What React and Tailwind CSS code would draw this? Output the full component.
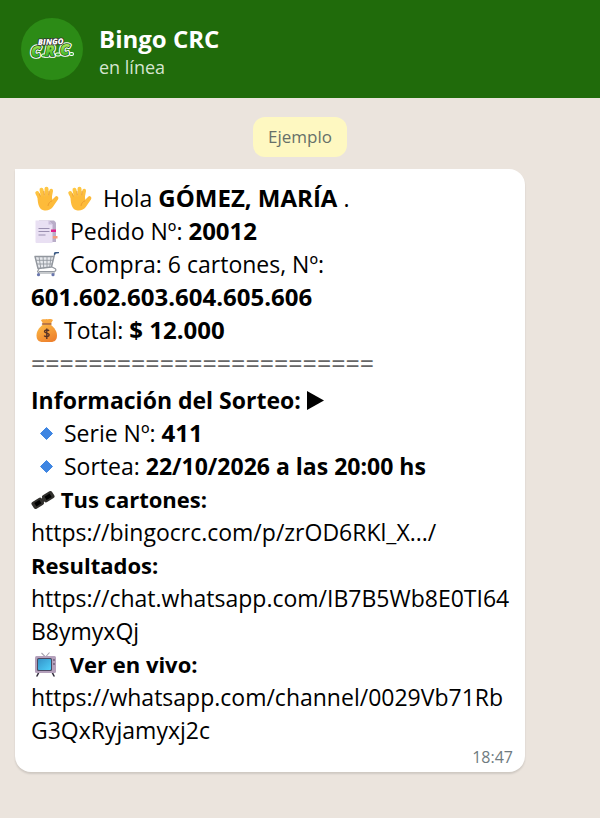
import React from "react";

const emojiClass = "inline-block align-middle size-[25px] ml-[3px] mr-[5px] -mt-[5px]";

const Hand = () => (
  <svg viewBox="0 0 25 25" className={emojiClass} aria-hidden="true">
    <defs>
      <linearGradient id="hand" gradientUnits="userSpaceOnUse" x1="8" y1="0" x2="14" y2="22">
        <stop offset="0" stopColor="#ffca45" />
        <stop offset="1" stopColor="#f9b037" />
      </linearGradient>
    </defs>
    <g stroke="url(#hand)" strokeLinecap="round" fill="none">
      <path d="M6.500 13 3.200 7" strokeWidth="3.800" />
      <path d="M9.200 12 7.500 3.800" strokeWidth="4" />
      <path d="M12.800 12 12.500 2.800" strokeWidth="4" />
      <path d="M15.800 12 17.200 4.600" strokeWidth="3.700" />
      <path d="M17 17.500 22.500 12" strokeWidth="3.600" />
    </g>
    <path
      d="M3.500 11 17.800 10l.6 4.500 3.200-2.600c1.600-1 3 .4 2.200 1.800l-5 7.200c-2 2.700-5.200 4-9.300 3.300C5.500 23.500 3.700 19 3.500 11Z"
      fill="#fdbb3a"
    />
    <path d="M14 20c.4-2.800 1.800-4.500 4.200-5.200M6.300 10.500 5.400 7.500M10.400 9.500 9.900 5M14.700 9.500 15 5" stroke="#e8952c" strokeWidth="0.800" fill="none" />
  </svg>
);

const Pages = () => (
  <svg viewBox="0 0 25 25" className={emojiClass} aria-hidden="true">
    <path d="M5 1.500h15l2 2v19.500H5Z" fill="#b9adc8" />
    <path d="M18.500 17h5v2.500h-5Z" fill="#f59c7c" />
    <path d="M1.500 1.500h13l4 4V24h-16a1 1 0 0 1-1-1Z" fill="#e9e0f3" />
    <path d="M14.500 1.500v4h4Z" fill="#cbbddb" />
    <path d="M4.500 9.500h11M4.500 12.500h11M4.500 16h7" stroke="#9a8fb0" strokeWidth="1" />
    <path d="M17 10.500h5V13h-5Z" fill="#e0218a" />
  </svg>
);

const Cart = () => (
  <svg viewBox="0 0 25 25" className={emojiClass} aria-hidden="true">
    <path d="M1 4.500h19l-2.500 10.500L4 16.500Z" fill="#e7e9ed" />
    <g fill="none" stroke="#92979e" strokeLinejoin="round">
      <path d="M1 4.500h19l-2.500 10.500L4 16.500Z" strokeWidth="1.400" />
      <path d="m5 4.500 1.800 12M9 4.500l.8 12M13 4.500v11.500M17 4.500l-1.300 11M2 8.300h17M3 12h15.500" strokeWidth="0.900" />
      <path d="M20 4.500 21 1.500M18 15l3.300 1.800c1 .9.500 2.700-1.300 2.700H5" strokeWidth="1.200" />
      <path d="m5 17-1.500 2.500L5 21h16" strokeWidth="1.100" />
    </g>
    <path d="m20.600 2 .4-1 3.500-.5" fill="none" stroke="#365783" strokeWidth="1.700" strokeLinecap="round" />
    <circle cx="4.500" cy="22.700" r="1.600" fill="#6976ad" />
    <circle cx="19" cy="22.700" r="1.600" fill="#6976ad" />
  </svg>
);

const MoneyBag = () => (
  <svg viewBox="0 0 25 25" className={emojiClass} aria-hidden="true">
    <defs>
      <linearGradient id="bag" x1="0" y1="0" x2="0.600" y2="1">
        <stop offset="0" stopColor="#fdbd46" />
        <stop offset="1" stopColor="#ee822e" />
      </linearGradient>
    </defs>
    <path d="M9 5.500 7 2.200C9 .2 10.500 2 12.500 1c2 1 4-1 6.500 1l-2.200 3.800Z" fill="#f9a73e" />
    <path d="M9 6.500h7.500c4 3 6.500 7 6.500 11 0 4.500-2.500 6.500-6 6.500H8.500C5 24 2.500 22 2.500 17.500c0-4 2.500-8 6.500-11Z" fill="url(#bag)" />
    <path d="M8.500 6H17" stroke="#a55b2a" strokeWidth="1.400" strokeLinecap="round" />
    <path d="M15 12.800c-.8-1.300-4.500-1.200-4.500.8s4.700 1 4.700 3.200-3.900 2.400-5 .8M12.800 10.500v10.500" fill="none" stroke="#573326" strokeWidth="1.400" />
  </svg>
);

const Diamond = () => (
  <svg viewBox="0 0 25 25" className={emojiClass} aria-hidden="true">
    <path d="m12.500 6.500 6 6-6 6-6-6Z" fill="#3f86e2" stroke="#3f86e2" strokeLinejoin="round" />
  </svg>
);

const Play = () => (
  <svg viewBox="0 0 17 19" className="inline-block align-middle w-[17px] h-[19px] -mt-1" aria-hidden="true">
    <path d="M0 0v19l17-9.500Z" fill="#000" />
  </svg>
);

const Ticket = () => (
  <svg viewBox="0 0 24 20" className="inline-block align-middle w-6 h-5 -mt-1" aria-hidden="true">
    <g transform="rotate(-32 12 10)">
      <rect x="0" y="6" width="11.600" height="8" rx="2" fill="#302f2c" />
      <rect x="12.400" y="6" width="11.600" height="8" rx="2" fill="#302f2c" />
      <rect x="3" y="8" width="6" height="4" fill="#000" />
      <rect x="15" y="8" width="6" height="4" fill="#000" />
      <path d="M11 10h2" stroke="#302f2c" strokeWidth="4" />
    </g>
  </svg>
);

const Tv = () => (
  <svg viewBox="0 0 25 25" className={emojiClass} aria-hidden="true">
    <defs>
      <linearGradient id="screen" x1="0" y1="0" x2="1" y2="1">
        <stop offset="0" stopColor="#3593c9" />
        <stop offset="1" stopColor="#4dd0fa" />
      </linearGradient>
    </defs>
    <path d="m7.500 1 4 4 4-4.500" fill="none" stroke="#a9a4b0" strokeWidth="1.100" />
    <path d="M5 20 3 24M18 20l2 4" stroke="#34303e" strokeWidth="1.600" strokeLinecap="round" />
    <rect x="1" y="4" width="21" height="17" rx="1.500" fill="#b4a0bb" />
    <rect x="3" y="6" width="15" height="13" rx="1.500" fill="#4c4961" />
    <rect x="4" y="7" width="13" height="11" rx="1" fill="url(#screen)" />
    <circle cx="20" cy="8" r="0.900" fill="#695a73" />
    <circle cx="20" cy="12" r="0.900" fill="#695a73" />
  </svg>
);

const Logo = () => (
  <svg viewBox="0 0 62 62" className="size-[62px] shrink-0" role="img" aria-label="Bingo CRC">
    <defs>
      <linearGradient id="crc" x1="0" y1="0" x2="0" y2="1">
        <stop offset="0.300" stopColor="#a2e352" />
        <stop offset="0.800" stopColor="#2fae25" />
      </linearGradient>
    </defs>
    <circle cx="31" cy="31" r="31" fill="#2c8b16" />
    <g fontFamily="Open Sans, sans-serif" fontStyle="italic" fontWeight="800" strokeLinejoin="round">
      <g fontSize="15">
        <path d="M22 37.500h2M36 36.500h2M50 36h1" stroke="#fff" strokeWidth="4" strokeLinecap="round" />
        <text x="10 24 39" y="39 38 37" fill="#fff" stroke="#fff" strokeWidth="3.600">
          CRC
        </text>
        <text x="10 24 39" y="39 38 37" fill="url(#crc)" stroke="#14590f" strokeWidth="1.400" paintOrder="stroke" aria-hidden="true">
          CRC
        </text>
        <path d="M22 37.500h2M36 36.500h2M50 36h1" stroke="#2fae25" strokeWidth="2" strokeLinecap="round" />
      </g>
      <text x="17" y="27" fontSize="8" fill="#fff" stroke="#333" strokeWidth="1.600" paintOrder="stroke" transform="rotate(-2 17 27)">
        BINGO
      </text>
    </g>
  </svg>
);

const Link = ({ href, children }) => (
  <p>
    <a href={href} className="break-all">
      {children}
    </a>
  </p>
);

const Value = ({ children }) => <b className="text-2xl leading-6">{children}</b>;

const App = () => {
  return (
    <div className="min-h-screen bg-[#ebe4dd] font-['Open_Sans',sans-serif] text-black">
      {/* Header */}
      <header className="flex items-center gap-4 bg-[#206b0b] px-[21px] py-[18px]">
        <Logo />
        <div className="pt-[5px]">
          <h1 className="text-2xl leading-[30px] font-bold text-white">Bingo CRC</h1>
          <p className="text-lg leading-[26px] text-[#d5e5d0]">en línea</p>
        </div>
      </header>

      <main className="px-[15px] pt-[19px] pb-6">
        <div className="flex justify-center">
          <span className="rounded-xl bg-[#fef8c1] px-[15px] py-2 text-[17px] leading-6 text-[#667069]">Ejemplo</span>
        </div>

        {/* Message */}
        <article className="mt-3 mr-[60px] rounded-2xl rounded-tl-none bg-white pl-4 pr-3 pt-[13px] text-[23px] leading-[33px] shadow-[0_2px_2px_rgba(0,0,0,0.12)]">
          <p>
            <Hand />
            <Hand /> Hola <Value>GÓMEZ, MARÍA</Value> .
          </p>
          <p>
            <Pages /> Pedido Nº: <Value>20012</Value>
          </p>
          <p>
            <Cart /> Compra: 6 cartones, Nº:
            <br />
            <Value>601.602.603.604.605.606</Value>
          </p>
          <p>
            <MoneyBag />
            Total: <Value>$ 12.000</Value>
          </p>
          <p className="text-[25px] leading-[33px] text-[#666]">========================</p>
          <h2 className="mt-1 font-bold">
            Información del Sorteo: <Play />
          </h2>
          <p>
            <Diamond />
            Serie Nº: <Value>411</Value>
          </p>
          <p>
            <Diamond />
            Sortea: <b>22/10/2026 a las 20:00 hs</b>
          </p>
          <h2 className="text-[22px] leading-[33px] font-bold">
            <Ticket /> Tus cartones:
          </h2>
          <Link href="#cartones">https://bingocrc.com/p/zrOD6RKl_X.../</Link>
          <h2 className="text-[22px] leading-[33px] font-bold">Resultados:</h2>
          <Link href="#resultados">https://chat.whatsapp.com/IB7B5Wb8E0TI64B8ymyxQj</Link>
          <h2 className="text-[22px] leading-[33px] font-bold">
            <Tv /> Ver en vivo:
          </h2>
          <Link href="#vivo">https://whatsapp.com/channel/0029Vb71RbG3QxRyjamyxj2c</Link>
          <time className="block pb-[5px] text-right text-base leading-5 text-[#6f7b80]">18:47</time>
        </article>
      </main>
    </div>
  );
};

export default App;
